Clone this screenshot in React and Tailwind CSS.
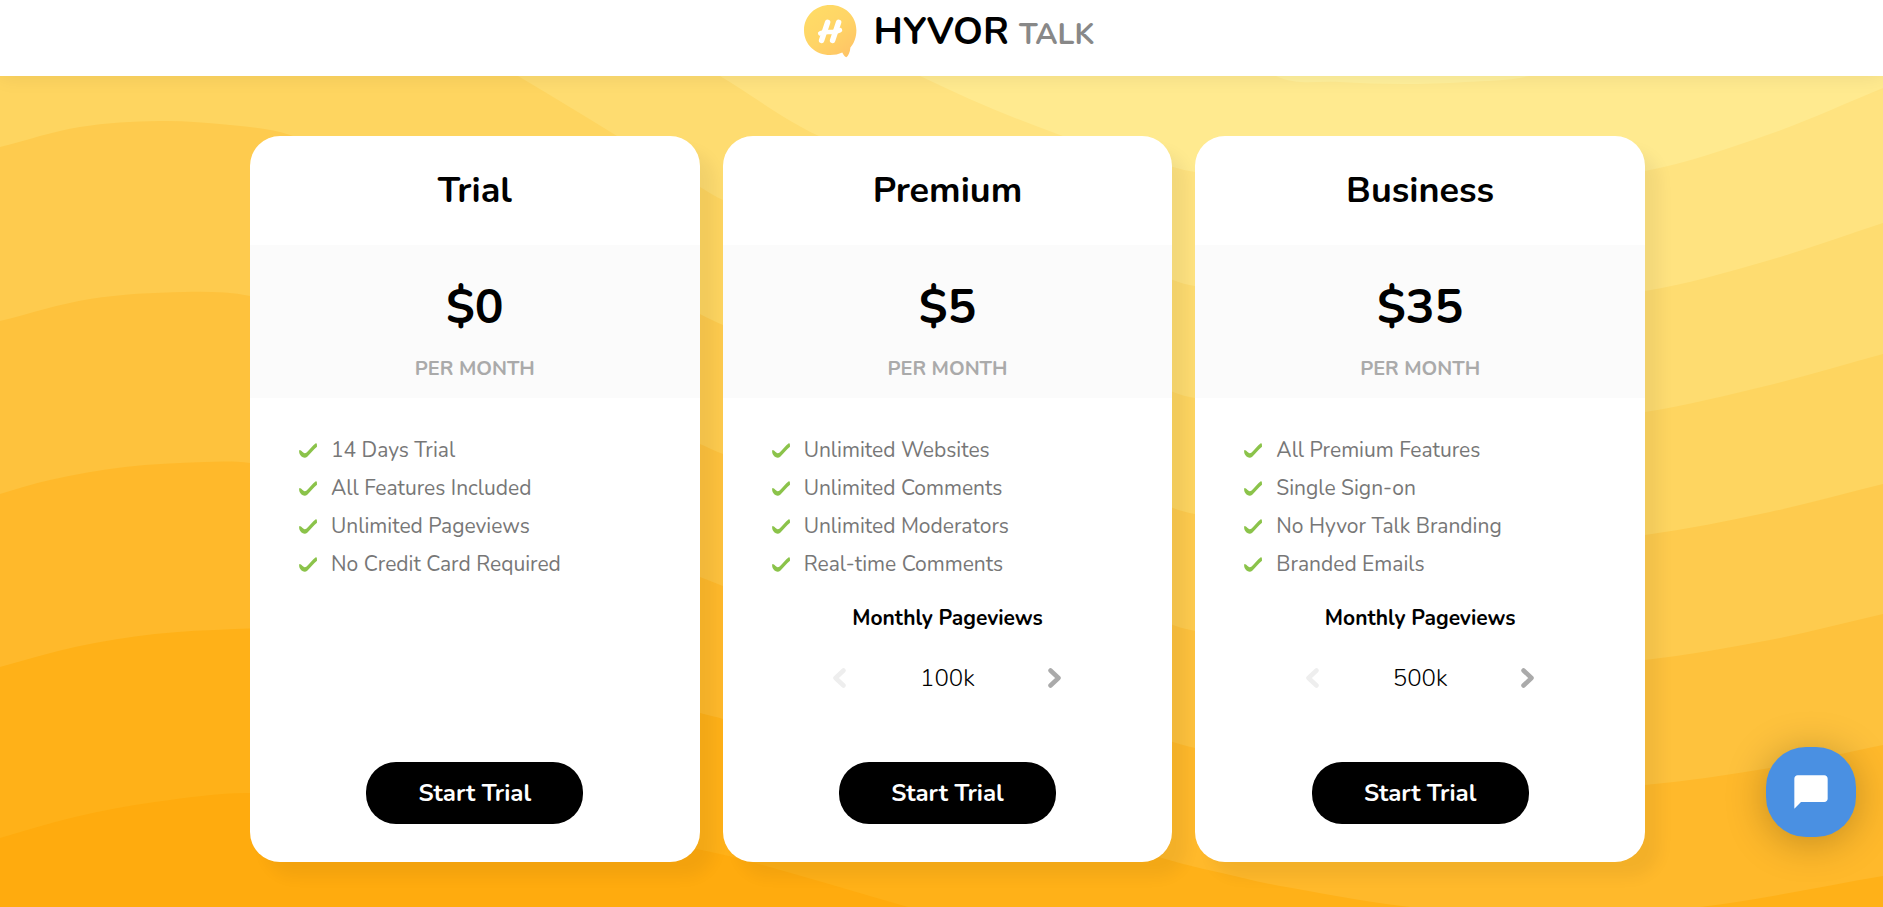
import { useState } from "react";

const BANDS = [
  { fill: "#ffea8f", points: [[0, -560], [1276, 76], [1339, 82], [1402, 84], [1466, 82], [1529, 76], [1883, -20]] },
  { fill: "#ffe380", points: [[0, -420], [720, -30], [920, 76], [1060, 135], [1173, 167], [1195, 172], [1420, 200], [1645, 171], [1770, 134], [1883, 88]] },
  { fill: "#fedc70", points: [[0, -200], [600, 5], [720, 76], [819, 136], [1173, 280], [1195, 286], [1410, 318], [1645, 291], [1770, 260], [1883, 223]] },
  { fill: "#fed560", points: [[0, -30], [170, -60], [400, 8], [518, 76], [617, 136], [700, 187], [723, 200], [1173, 392], [1195, 398], [1430, 438], [1645, 412], [1770, 385], [1883, 354]] },
  { fill: "#fecb4e", points: [[0, 147], [80, 127], [160, 121], [230, 125], [290, 135], [500, 214], [700, 314], [723, 325], [1173, 508], [1195, 514], [1440, 558], [1645, 535], [1770, 512], [1883, 484]] },
  { fill: "#fec23d", points: [[0, 321], [90, 299], [185, 292], [250, 296], [480, 350], [700, 444], [723, 454], [1173, 625], [1195, 631], [1440, 678], [1645, 660], [1770, 640], [1883, 614]] },
  { fill: "#ffb92b", points: [[0, 494], [50, 480], [125, 467], [205, 462], [250, 463], [480, 498], [700, 577], [723, 586], [1173, 742], [1195, 748], [1440, 798], [1645, 785], [1770, 768], [1883, 745]] },
  { fill: "#ffb118", points: [[0, 667], [75, 647], [155, 634], [235, 629], [260, 629], [480, 652], [700, 713], [723, 719], [1162, 858], [1243, 878], [1280, 886], [1410, 907], [1550, 916], [1700, 907], [1883, 876]] },
  { fill: "#ffab0e", points: [[0, 838], [75, 817], [155, 802], [250, 793], [480, 803], [697, 849], [752, 862], [908, 907], [1100, 960], [1883, 1040]] },
];

function wavePath(points) {
  const last = points.length - 1;
  const slope = points.map((_, i) => {
    const a = points[Math.max(0, i - 1)];
    const b = points[Math.min(last, i + 1)];
    return (b[1] - a[1]) / (b[0] - a[0]);
  });
  let d = `M${points[0][0]} ${points[0][1]}`;
  for (let i = 0; i < last; i++) {
    const [x0, y0] = points[i];
    const [x1, y1] = points[i + 1];
    const h = (x1 - x0) / 3;
    d += `C${x0 + h} ${y0 + slope[i] * h} ${x1 - h} ${y1 - slope[i + 1] * h} ${x1} ${y1}`;
  }
  return `${d}V1200H0Z`;
}

function Waves() {
  return (
    <svg
      className="absolute inset-0 -z-10 h-full w-full"
      viewBox="0 76 1883 831"
      preserveAspectRatio="none"
      aria-hidden="true"
    >
      <rect x="0" y="76" width="1883" height="831" fill="#fff09c" />
      {BANDS.map((band) => (
        <path key={band.fill} d={wavePath(band.points)} fill={band.fill} />
      ))}
    </svg>
  );
}

function Logo() {
  return (
    <svg className="size-[53px]" viewBox="0 0 53 53" fill="none" aria-hidden="true">
      <defs>
        <linearGradient id="bubble" x1="10" y1="4" x2="46" y2="50" gradientUnits="userSpaceOnUse">
          <stop offset="0" stopColor="#ffdb66" />
          <stop offset="0.5" stopColor="#ffd466" />
          <stop offset="1" stopColor="#ffc466" />
        </linearGradient>
      </defs>
      <path
        d="M26.2 0C11.5 0 0 10.800 0 25.200C0 39.500 11.500 50 26.200 50C30.600 50 34.800 49.200 38.300 47.500C39 49.300 40.500 51.300 42.300 52.300C44.200 51 46 47.500 46.400 42.500C50.200 38 52.400 32 52.400 25.200C52.400 10.800 40.900 0 26.200 0Z"
        fill="url(#bubble)"
      />
      <g stroke="#fff" strokeLinecap="round">
        <path d="M23.600 17.300L17.600 35.400M34.600 17.300L28.600 35.400" strokeWidth="5.500" />
        <path d="M16.200 28.400C21 25.500 29 28.700 36 25.200" strokeWidth="4.500" />
      </g>
    </svg>
  );
}

function Check() {
  return (
    <svg className="h-[15px] w-[18px] shrink-0" viewBox="0 0 18 15" aria-hidden="true">
      <path
        d="M.4 7C1.600 7 3 8.400 4.300 9.600C5.200 10.500 6.500 10.400 7.600 9.400C10.500 6.800 13.500 2.700 16.800.3C17.700-.1 18 .6 18 3.700C14.500 6.600 11.700 10.400 8.500 13.400C6.500 15.200 4.200 15 2.200 13.200C.4 11.400-.3 8.800.4 7Z"
        fill="#8bc34a"
      />
    </svg>
  );
}

function Chevron({ left }) {
  return (
    <svg className="h-5 w-[13px]" viewBox="0 0 13 20" fill="none" aria-hidden="true">
      <path
        d={left ? "M10.500 2.500L2.500 10L10.500 17.500" : "M2.500 2.500L10.500 10L2.500 17.500"}
        stroke="currentColor"
        strokeWidth="4.500"
        strokeLinecap="round"
        strokeLinejoin="round"
      />
    </svg>
  );
}

const PLANS = [
  {
    name: "Trial",
    prices: ["$0"],
    features: ["14 Days Trial", "All Features Included", "Unlimited Pageviews", "No Credit Card Required"],
  },
  {
    name: "Premium",
    prices: ["$5", "$10"],
    views: ["100k", "200k"],
    features: ["Unlimited Websites", "Unlimited Comments", "Unlimited Moderators", "Real-time Comments"],
  },
  {
    name: "Business",
    prices: ["$35", "$60"],
    views: ["500k", "1M"],
    features: ["All Premium Features", "Single Sign-on", "No Hyvor Talk Branding", "Branded Emails"],
  },
];

function PlanCard({ plan }) {
  const [tier, setTier] = useState(0);
  return (
    <section className="flex flex-col rounded-[30px] bg-white pb-[38px] text-center shadow-[15px_15px_15px_rgba(0,0,0,0.05)]">
      <h2 className="pt-[33px] pb-8 text-[36px] leading-[44px] font-bold">{plan.name}</h2>
      <div className="bg-[#fbfbfb] pt-[30px] pb-[14px]">
        <p className="text-[48px] leading-[64px] font-bold">{plan.prices[tier]}</p>
        <p className="pt-[15px] text-[20px] leading-[30px] font-bold text-[#aaa]">PER MONTH</p>
      </div>
      <ul className="px-[49px] pt-[33px] text-left text-[21px] leading-[38px] text-[#777]">
        {plan.features.map((feature) => (
          <li key={feature} className="flex items-center gap-[14px]">
            <Check />
            {feature}
          </li>
        ))}
      </ul>
      {plan.views && (
        <div className="pt-5">
          <h3 className="text-[21px] leading-[30px] font-bold">Monthly Pageviews</h3>
          <div className="mx-auto flex w-[228px] items-center justify-between pt-[30px] text-2xl leading-[30px] font-light">
            <button
              type="button"
              aria-label="Fewer pageviews"
              disabled={tier === 0}
              onClick={() => setTier(tier - 1)}
              className="text-[#aaa] disabled:text-[#eee]"
            >
              <Chevron left />
            </button>
            <span>{plan.views[tier]}</span>
            <button
              type="button"
              aria-label="More pageviews"
              disabled={tier === plan.views.length - 1}
              onClick={() => setTier(tier + 1)}
              className="text-[#aaa] disabled:text-[#eee]"
            >
              <Chevron />
            </button>
          </div>
        </div>
      )}
      <div className="mt-auto pt-[69px]">
        <button type="button" className="h-[62px] w-[217px] rounded-[30px] bg-black text-2xl font-bold text-white">
          Start Trial
        </button>
      </div>
    </section>
  );
}

export default function App() {
  return (
    <div className="flex min-h-screen flex-col bg-white font-['Nunito','Lato',sans-serif] text-black">
      <header className="z-10 flex h-[76px] justify-center bg-white pt-[5px] pl-[15px] shadow-[0_0_20px_rgba(0,0,0,0.08)]">
        <a href="#home" className="flex h-[53px] items-start gap-[17px]">
          <Logo />
          <span className="flex items-baseline gap-[10px] font-bold">
            <span className="text-[38px] leading-[54px]">HYVOR</span>
            <span className="text-[30px] leading-[54px] text-[#888]">TALK</span>
          </span>
        </a>
      </header>
      <main className="relative isolate flex-1 overflow-hidden pt-[60px] pb-[45px] pl-3">
        <Waves />
        <div className="mx-auto grid max-w-[1395px] grid-cols-3 gap-[23px]">
          {PLANS.map((plan) => (
            <PlanCard key={plan.name} plan={plan} />
          ))}
        </div>
      </main>
      <button
        type="button"
        aria-label="Open chat"
        className="fixed right-[27px] bottom-[70px] z-20 flex size-[90px] items-center justify-center rounded-[40px] bg-[#4a90e2] shadow-[0_5px_40px_rgba(0,0,0,0.25)]"
      >
        <svg className="size-10" viewBox="0 0 24 24" fill="#fff" aria-hidden="true">
          <path d="M20 2H4c-1.100 0-2 .9-2 2v18l4-4h14c1.100 0 2-.9 2-2V4c0-1.100-.9-2-2-2z" />
        </svg>
      </button>
    </div>
  );
}
